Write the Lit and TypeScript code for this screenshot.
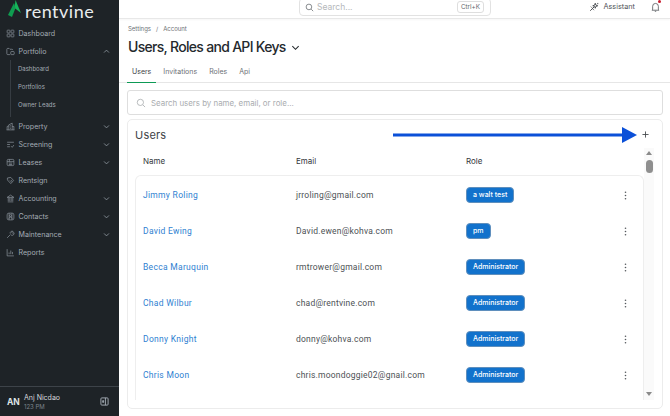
import { LitElement, html, css, svg } from 'lit';
import { customElement } from 'lit/decorators.js';

const ICONS: Record<string, unknown> = {
  dashboard: svg`<rect x="2" y="2" width="5" height="5" rx="1"/><rect x="9" y="2" width="5" height="5" rx="1"/><rect x="2" y="9" width="5" height="5" rx="1"/><rect x="9" y="9" width="5" height="5" rx="1"/>`,
  portfolio: svg`<path d="M7 13.500H3a1.500 1.500 0 0 1-1.500-1.500V4A1.500 1.500 0 0 1 3 2.500h2.500L7 4h3.500A1.500 1.500 0 0 1 12 5.500"/><rect x="8.500" y="8" width="6" height="5.500" rx="1"/>`,
  property: svg`<path d="M5 14V5l6-3v12M2 14V8l3-1M1 14h14M7.500 6.500h1.500M7.500 9h1.500M7.500 11.500h1.500M11 8h3v6"/>`,
  screening: svg`<path d="M2 4h12M2 8h5M2 12h5M9 11l2 2 3-4"/>`,
  leases: svg`<rect x="2" y="2.500" width="12" height="11" rx="2"/><path d="M2 6.500h12M6 2.500v4M5 9h6M5 11.500h6"/>`,
  rentsign: svg`<path d="M2.500 3.500l6-1 5 5.500-5 5.500-6-6.500zM5 5.500h.6M7 8l3 3M9 7l2 2"/>`,
  accounting: svg`<path d="M2 6l6-4 6 4zM3 14h10M4 6.500v6M6.700 6.500v6M9.300 6.500v6M12 6.500v6"/>`,
  contacts: svg`<rect x="2" y="2" width="12" height="12" rx="3"/><circle cx="8" cy="6.500" r="1.800"/><path d="M5 12c.4-2 1.500-3 3-3s2.600 1 3 3M5.500 2v12M10.500 2v12"/>`,
  maintenance: svg`<path d="M2 14l6-6M7.500 6.500a3.500 3.500 0 0 1 5-4l-2 2 1.500 1.500 2-1.500a3.500 3.500 0 0 1-5 4.500"/>`,
  reports: svg`<path d="M2 2v12h12M5.500 11V8M8.500 11V4.500M11.500 11V7"/>`,
};

interface NavItem {
  label: string;
  icon: string;
  chevron?: 'up' | 'down';
  children?: string[];
}

const NAV: NavItem[] = [
  { label: 'Dashboard', icon: 'dashboard' },
  { label: 'Portfolio', icon: 'portfolio', chevron: 'up', children: ['Dashboard', 'Portfolios', 'Owner Leads'] },
  { label: 'Property', icon: 'property', chevron: 'down' },
  { label: 'Screening', icon: 'screening', chevron: 'down' },
  { label: 'Leases', icon: 'leases', chevron: 'down' },
  { label: 'Rentsign', icon: 'rentsign' },
  { label: 'Accounting', icon: 'accounting', chevron: 'down' },
  { label: 'Contacts', icon: 'contacts', chevron: 'down' },
  { label: 'Maintenance', icon: 'maintenance', chevron: 'down' },
  { label: 'Reports', icon: 'reports' },
];

const USERS = [
  { name: 'Jimmy Roling', email: 'jrroling@gmail.com', role: 'a walt test' },
  { name: 'David Ewing', email: 'David.ewen@kohva.com', role: 'pm' },
  { name: 'Becca Maruquin', email: 'rmtrower@gmail.com', role: 'Administrator' },
  { name: 'Chad Wilbur', email: 'chad@rentvine.com', role: 'Administrator' },
  { name: 'Donny Knight', email: 'donny@kohva.com', role: 'Administrator' },
  { name: 'Chris Moon', email: 'chris.moondoggie02@gnail.com', role: 'Administrator' },
];

const searchIcon = (size: number) => html`<svg width=${size} height=${size} viewBox="0 0 16 16" fill="none" stroke="currentColor" stroke-width="1.300"><circle cx="7" cy="7" r="5"/><path d="M11 11l3.500 3.500"/></svg>`;

const chevron = (dir: string, size = 10) => html`<svg width=${size} height=${size} viewBox="0 0 10 10" fill="none" stroke="currentColor" stroke-width="1.200"><path d=${dir === 'up' ? 'M1.500 6.500L5 3l3.500 3.500' : 'M1.500 3.500L5 7l3.500-3.500'}/></svg>`;

@customElement('app-root')
export class AppRoot extends LitElement {
  static styles = css`
    :host {
      display: flex;
      width: 670px;
      height: 416px;
      overflow: hidden;
      position: relative;
      background: #fff;
      font-family: Inter, "Liberation Sans", sans-serif;
    }
    .side {
      width: 119px;
      flex: none;
      background: #1e2327;
      color: #a3abb4;
      display: flex;
      flex-direction: column;
      font-size: 7.100px;
    }
    .logo {
      height: 24px;
      display: flex;
      align-items: flex-start;
      padding-left: 8px;
      gap: 4px;
      flex: none;
    }
    .logo span {
      color: #e9ecee;
      font-size: 18px;
      font-family: Lato, sans-serif;
      letter-spacing: 0.5px;
      line-height: 22px;
    }
    .nav {
      display: flex;
      flex-direction: column;
      flex: 1;
    }
    .item {
      height: 18px;
      display: flex;
      align-items: center;
      padding-left: 6px;
      gap: 3.500px;
    }
    .item svg.ic {
      width: 9px;
      height: 9px;
      fill: none;
      stroke: #8f98a1;
      stroke-width: 1.200;
      flex: none;
    }
    .item .lab {
      flex: 1;
    }
    .item .chev {
      display: flex;
      margin-right: 9px;
      color: #8f98a1;
    }
    .sub {
      margin-left: 10px;
      padding-left: 7px;
      border-left: 1px solid #363c42;
      display: flex;
      flex-direction: column;
      height: 57px;
    }
    .sub div {
      height: 18px;
      line-height: 18px;
      font-size: 6px;
    }
    .foot {
      height: 29px;
      border-top: 1px solid #3d4349;
      display: flex;
      align-items: center;
      padding: 0 10px 0 7px;
      flex: none;
    }
    .avatar {
      width: 13px;
      font-size: 8.500px;
      font-weight: 700;
      color: #dfe3e6;
      margin-right: 4px;
    }
    .who {
      flex: 1;
      line-height: 10px;
      color: #d4d8dc;
      font-size: 7px;
    }
    .who small {
      display: block;
      color: #7b838b;
      font-size: 6px;
      line-height: 8px;
    }
    .main {
      flex: 1;
      min-width: 0;
      display: flex;
      flex-direction: column;
    }
    .top {
      height: 18px;
      flex: none;
      border-bottom: 1px solid #e8e8e8;
      display: flex;
      align-items: flex-start;
      padding-left: 180px;
      box-shadow: 0 1px 2px rgba(0, 0, 0, 0.04);
    }
    .global {
      margin-top: -2px;
      width: 192px;
      height: 18px;
      box-sizing: border-box;
      border: 1px solid #e2e2e2;
      border-radius: 4px;
      display: flex;
      align-items: center;
      padding: 0 6px 0 5px;
      color: #5f6468;
      gap: 3px;
      font-size: 8.500px;
    }
    .global .ph {
      flex: 1;
      color: #b5b8bb;
    }
    .kbd {
      border: 1px solid #dedede;
      border-radius: 3px;
      font-size: 6.300px;
      padding: 1px 3px;
      color: #63676b;
    }
    .assist {
      display: flex;
      align-items: center;
      gap: 4px;
      font-size: 7.300px;
      color: #4f5357;
      height: 13px;
      margin-left: auto;
      margin-right: 16px;
    }
    .bell {
      margin-right: 10px;
      position: relative;
      color: #4f5357;
      display: flex;
      height: 13px;
      align-items: center;
    }
    .bell i {
      position: absolute;
      right: -1px;
      top: 0;
      width: 3px;
      height: 3px;
      background: #c7182a;
      border-radius: 50%;
    }
    .content {
      flex: 1;
      display: flex;
      flex-direction: column;
      padding-top: 5px;
      min-height: 0;
    }
    .crumb {
      padding-left: 9px;
      font-size: 6px;
      color: #6d7175;
      display: flex;
      gap: 5px;
      line-height: 9px;
    }
    .title {
      padding-left: 9px;
      margin-top: 3px;
      display: flex;
      align-items: center;
      gap: 5px;
      font-size: 14px;
      font-weight: 500;
      color: #24292d;
      line-height: 22px;
      letter-spacing: -0.7px;
    }
    .tabs {
      margin-top: 6px;
      padding-left: 8px;
      display: flex;
      border-bottom: 1px solid #e6e6e6;
      font-size: 7px;
      color: #6d7175;
      height: 18px;
      box-sizing: content-box;
    }
    .tab {
      padding: 0 5px;
      margin-right: 2px;
      line-height: 16px;
      height: 19px;
      box-sizing: border-box;
    }
    .tab.on {
      color: #3c4145;
      border-bottom: 1px solid #0d9a55;
    }
    .find {
      margin: 7px 7px 0 8px;
      height: 25px;
      flex: none;
      box-sizing: border-box;
      border: 1px solid #dedede;
      border-radius: 3px;
      display: flex;
      align-items: center;
      padding-left: 8px;
      gap: 5px;
      font-size: 7.900px;
      color: #a9acaf;
    }
    .card {
      margin: 4px 7px 7px 8px;
      flex: 1;
      min-height: 0;
      border: 1px solid #ececec;
      border-radius: 5px;
      position: relative;
      overflow: hidden;
      padding: 0 8px 0 7px;
    }
    .card h2 {
      margin: 0;
      font-size: 11px;
      font-weight: 400;
      color: #3e4347;
      line-height: 14px;
      padding-top: 8px;
      letter-spacing: 0.2px;
    }
    .plus {
      position: absolute;
      right: 13px;
      top: 11px;
      color: #45494d;
      display: flex;
    }
    .cols, .row {
      display: grid;
      grid-template-columns: 153px 170px 1fr 24px;
      align-items: center;
    }
    .cols {
      margin-top: 13px;
      padding-left: 8px;
      font-size: 8px;
      color: #34383c;
      height: 12px;
    }
    .body {
      display: flex;
      margin-top: 8px;
    }
    .list {
      flex: 1;
      border: 1px solid #eeeeee;
      border-bottom: none;
      border-radius: 6px 6px 0 0;
      height: 225px;
      box-sizing: border-box;
      overflow: hidden;
    }
    .rows {
      margin-top: 1px;
    }
    .row {
      height: 36px;
      padding: 0 5.500px 0 7px;
      font-size: 8.500px;
      font-family: Roboto, sans-serif;
      letter-spacing: 0.22px;
      color: #4d5155;
    }
    .row a {
      color: #2f7fd1;
      letter-spacing: 0.3px;
    }
    .badge {
      justify-self: start;
      background: #1272cc;
      color: #fff;
      border-radius: 4px;
      border: 1px solid #5f8fbd;
      font-family: Inter, sans-serif;
      font-size: 7px;
      font-weight: 500;
      letter-spacing: 0;
      padding: 0 6px;
      line-height: 14px;
    }
    .dots {
      display: flex;
      justify-content: center;
      color: #55595d;
    }
    .scroll {
      width: 10px;
      flex: none;
      background: #fafafa;
      margin-top: -27px;
      height: 252px;
      display: flex;
      flex-direction: column;
      align-items: center;
      position: relative;
    }
    .scroll .up {
      margin-top: 3px;
      border: 3px solid transparent;
      border-bottom: 4px solid #8a8a8a;
      border-top: none;
    }
    .scroll .thumb {
      margin-top: 5px;
      width: 7px;
      height: 13px;
      border-radius: 4px;
      background: #8f8f8f;
    }
    .scroll .down {
      position: absolute;
      bottom: 4px;
      border: 3px solid transparent;
      border-top: 4px solid #8a8a8a;
      border-bottom: none;
    }
    .arrow {
      position: absolute;
      left: 393px;
      top: 127px;
    }
  `;

  render() {
    return html`
      <aside class="side">
        <div class="logo">
          <svg width="13" height="17" viewBox="0 0 13 17"><path d="M7.500 0L13 13 6.500 8z" fill="#17b35a"/><path d="M6 3L7.500 8 4 17 0 15z" fill="#0f9d50"/></svg>
          <span>rentvine</span>
        </div>
        <nav class="nav">
          ${NAV.map((n) => html`
            <div class="item">
              <svg class="ic" viewBox="0 0 16 16">${ICONS[n.icon]}</svg>
              <span class="lab">${n.label}</span>
              ${n.chevron ? html`<span class="chev">${chevron(n.chevron, 7)}</span>` : ''}
            </div>
            ${n.children ? html`<div class="sub">${n.children.map((c) => html`<div>${c}</div>`)}</div>` : ''}
          `)}
        </nav>
        <div class="foot">
          <span class="avatar">AN</span>
          <span class="who">Anj Nicdao<small>123 PM</small></span>
          <svg width="9" height="9" viewBox="0 0 10 10" fill="none" stroke="#aab2bb" stroke-width="1"><rect x="1" y="1" width="8" height="8" rx="1"/><path d="M6 1v8M3 4h1v2H3z"/></svg>
        </div>
      </aside>
      <main class="main">
        <header class="top">
          <div class="global">
            ${searchIcon(9)}
            <span class="ph">Search...</span>
            <span class="kbd">Ctrl+K</span>
          </div>
          <div class="assist">
            <svg width="10" height="10" viewBox="0 0 16 16" fill="none" stroke="currentColor" stroke-width="1.600"><path d="M2 14l6-6M3 7.500l1.500 1.500M6.500 11.500L8 13M10 2l1 3 3 1-3 1-1 3-1-3-3-1 3-1zM14 1.500v2"/></svg>
            Assistant
          </div>
          <div class="bell">
            <svg width="9" height="10" viewBox="0 0 12 14" fill="none" stroke="currentColor" stroke-width="1.100"><path d="M2 10.500V6a4 4 0 0 1 8 0v4.500l1 1H1zM5 13h2"/></svg>
            <i></i>
          </div>
        </header>
        <div class="content">
          <div class="crumb"><span>Settings</span><span>/</span><span>Account</span></div>
          <div class="title">Users, Roles and API Keys ${chevron('down', 9)}</div>
          <div class="tabs">
            <div class="tab on">Users</div>
            <div class="tab">Invitations</div>
            <div class="tab">Roles</div>
            <div class="tab">Api</div>
          </div>
          <div class="find">${searchIcon(10)} Search users by name, email, or role...</div>
          <section class="card">
            <h2>Users</h2>
            <span class="plus"><svg width="7" height="7" viewBox="0 0 8 8" stroke="currentColor" stroke-width="1"><path d="M4 .5v7M.5 4h7"/></svg></span>
            <div class="cols"><span>Name</span><span>Email</span><span>Role</span></div>
            <div class="body">
              <div class="list">
                <div class="rows">
                  ${USERS.map((u) => html`
                    <div class="row">
                      <a>${u.name}</a>
                      <span>${u.email}</span>
                      <span class="badge">${u.role}</span>
                      <span class="dots"><svg width="3" height="9" viewBox="0 0 3 9" fill="currentColor"><circle cx="1.500" cy="1.200" r="0.800"/><circle cx="1.500" cy="4.500" r="0.800"/><circle cx="1.500" cy="7.800" r="0.800"/></svg></span>
                    </div>
                  `)}
                </div>
              </div>
              <div class="scroll"><i class="up"></i><i class="thumb"></i><i class="down"></i></div>
            </div>
          </section>
        </div>
      </main>
      <svg class="arrow" width="245" height="16" viewBox="0 0 245 16"><path d="M0 6.500h229V0l15 8-15 8V9.500H0z" fill="#0b50d8"/></svg>
    `;
  }
}
